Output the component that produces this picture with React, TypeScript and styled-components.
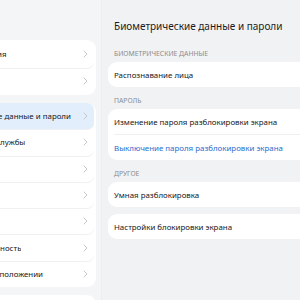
import React from "react";
import styled, { createGlobalStyle } from "styled-components";

const GlobalStyle = createGlobalStyle`
  html, body {
    margin: 0;
    padding: 0;
    background: #f1f2f4;
  }
  body {
    font-family: "Noto Sans", "Open Sans", sans-serif;
    -webkit-font-smoothing: antialiased;
  }
`;

type MenuItem = { label: string; active?: boolean };

const menuGroups: { rowHeight: number; items: MenuItem[] }[] = [
  { rowHeight: 27.5, items: [{ label: "Звуки и вибрация" }, { label: "Уведомления" }] },
  {
    rowHeight: 26.3,
    items: [
      { label: "Биометрические данные и пароли", active: true },
      { label: "Приложения и службы" },
      { label: "Батарея" },
      { label: "Память" },
      { label: "Безопасность" },
      { label: "Конфиденциальность" },
      { label: "Данные о местоположении" },
    ],
  },
  { rowHeight: 27, items: [{ label: "Специальные возможности" }] },
];

type Option = { label: string; link?: boolean };

const sections: { title: string; cards: Option[][] }[] = [
  { title: "Биометрические данные", cards: [[{ label: "Распознавание лица" }]] },
  {
    title: "Пароль",
    cards: [
      [
        { label: "Изменение пароля разблокировки экрана" },
        { label: "Выключение пароля разблокировки экрана", link: true },
      ],
    ],
  },
  {
    title: "Другое",
    cards: [
      [{ label: "Умная разблокировка" }],
      [{ label: "Настройки блокировки экрана" }],
    ],
  },
];

const Chevron = () => (
  <svg width="5" height="8" viewBox="0 0 5 8">
    <path d="M1 1l3 3-3 3" fill="none" stroke="#c4c6ca" strokeWidth="1" strokeLinecap="round" strokeLinejoin="round" />
  </svg>
);

const App = (): JSX.Element => {
  return (
    <>
      <GlobalStyle />
      <Screen>
        <Sidebar>
          <SideList>
            {menuGroups.map((group, gi) => (
              <SideCard key={gi}>
                {group.items.map((item, i) => (
                  <SideRow
                    key={item.label}
                    active={item.active}
                    last={i === group.items.length - 1}
                    rowHeight={group.rowHeight}
                  >
                    <SideText>{item.label}</SideText>
                    <Chevron />
                  </SideRow>
                ))}
              </SideCard>
            ))}
          </SideList>
        </Sidebar>
        <Content>
          <Title>Биометрические данные и пароли</Title>
          {sections.map((section) => (
            <Section key={section.title}>
              <SectionTitle>{section.title}</SectionTitle>
              {section.cards.map((card, ci) => (
                <Card key={ci}>
                  {card.map((opt, i) => (
                    <OptionRow key={opt.label} last={i === card.length - 1}>
                      <OptionText link={opt.link}>{opt.label}</OptionText>
                    </OptionRow>
                  ))}
                </Card>
              ))}
            </Section>
          ))}
        </Content>
      </Screen>
    </>
  );
};

export default App;

const Screen = styled.div`
  display: flex;
  width: 300px;
  height: 300px;
  overflow: hidden;
`;

const Sidebar = styled.div`
  width: 101px;
  flex-shrink: 0;
  overflow: hidden;
  background: #f4f5f7;
  border-right: 1px solid #eceef0;
`;

const SideList = styled.div`
  margin-left: -70px;
  width: 166px;
  padding-top: 40px;
  display: flex;
  flex-direction: column;
  gap: 8px;
`;

const SideCard = styled.div`
  background: #ffffff;
  border-radius: 9px;
  padding: 0 2px;
`;

const SideRow = styled.div<{ active?: boolean; last?: boolean; rowHeight: number }>`
  display: flex;
  align-items: center;
  justify-content: space-between;
  height: ${(p) => p.rowHeight}px;
  padding: 0 6px;
  border-radius: 7px;
  background: ${(p) => (p.active ? "#e2eefc" : "transparent")};
  box-shadow: ${(p) => (p.last ? "none" : "0 1px 0 #eef0f2")};
`;

const SideText = styled.span`
  font-size: 7.9px;
  color: #16171a;
  white-space: nowrap;
  overflow: hidden;
`;

const Content = styled.div`
  flex: 1;
  min-width: 0;
  overflow: hidden;
  padding: 16px 0 0 6px;
`;

const Title = styled.div`
  font-size: 10px;
  color: #1c1d1f;
  padding-left: 6px;
  height: 24px;
  line-height: 20px;
  white-space: nowrap;
`;

const Section = styled.div`
  display: flex;
  flex-direction: column;
`;

const SectionTitle = styled.div`
  font-size: 6.8px;
  color: #8a8c90;
  text-transform: uppercase;
  padding: 9px 0 3px 6px;
  line-height: 10px;
`;

const Card = styled.div`
  background: #ffffff;
  border-radius: 9px;
  margin-right: -20px;
  padding: 0 6px;
  & + & {
    margin-top: 7px;
  }
`;

const OptionRow = styled.div<{ last?: boolean }>`
  display: flex;
  align-items: center;
  height: 25px;
  border-bottom: ${(p) => (p.last ? "none" : "1px solid #eef0f2")};
`;

const OptionText = styled.span<{ link?: boolean }>`
  font-size: 7.9px;
  color: ${(p) => (p.link ? "#2b6cd0" : "#16171a")};
  white-space: nowrap;
`;
